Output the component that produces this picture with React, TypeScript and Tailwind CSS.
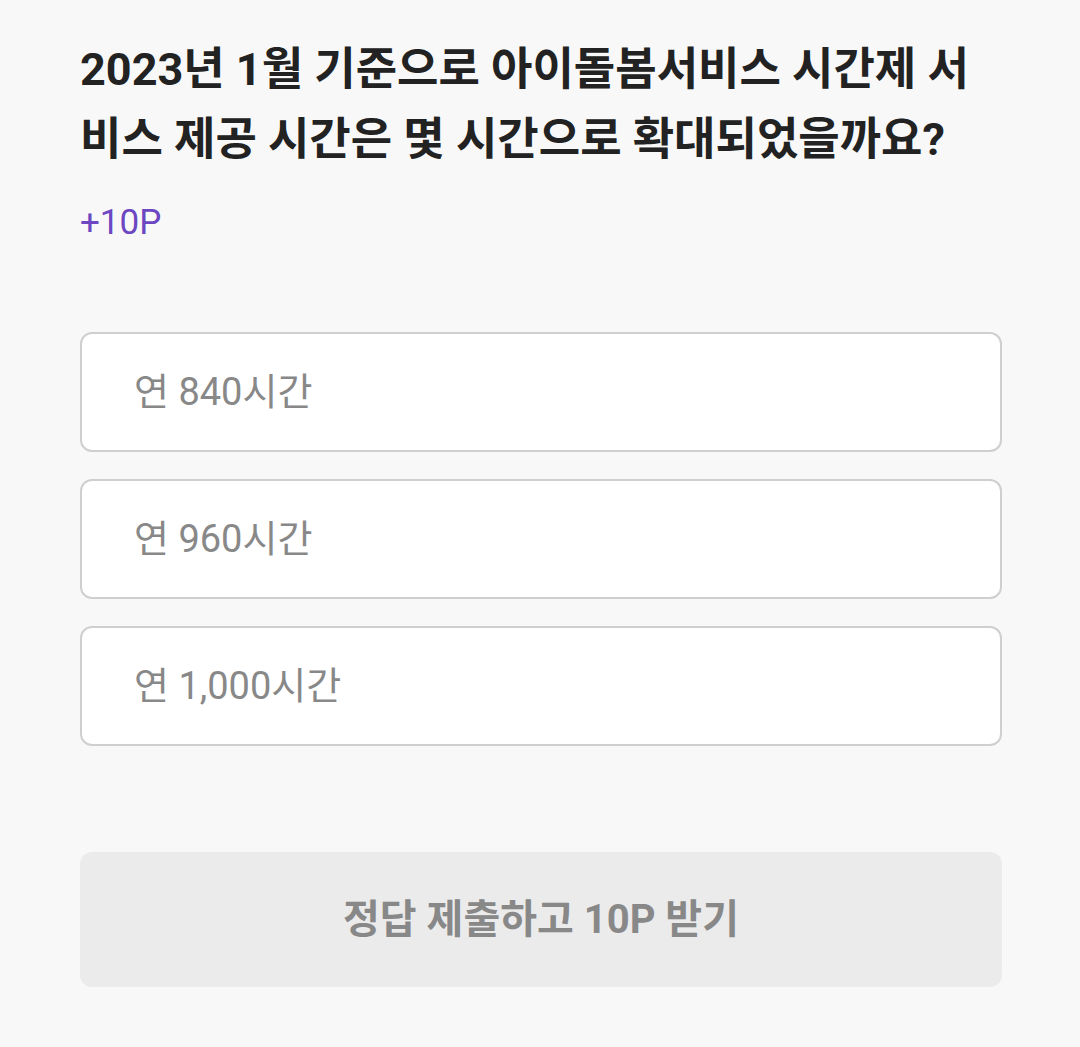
const options = ["연 840시간", "연 960시간", "연 1,000시간"];

export default function App() {
  return (
    <div className="min-h-screen w-full bg-[#f8f8f8] font-['Roboto','Noto_Sans_CJK_KR',sans-serif]">
      <div className="px-[80px] pt-[35px] pb-[60px] w-[1082px]">
        {/* Question */}
        <h1 className="text-[45px] font-bold leading-[70px] text-[#222222]">
          2023년 1월 기준으로 아이돌봄서비스 시간제 서비스 제공 시간은 몇 시간으로 확대되었을까요?
        </h1>
        <p className="mt-[28px] text-[35px] leading-[40px] text-[#6c47c1]">+10P</p>

        {/* Options */}
        <div className="mt-[89px] flex flex-col gap-[27px]">
          {options.map((o) => (
            <button
              key={o}
              className="h-[120px] w-full rounded-[12px] border-2 border-[#cfcfcf] bg-white pl-[52px] text-left text-[38px] text-[#888888]"
            >
              {o}
            </button>
          ))}
        </div>

        {/* Submit */}
        <button className="mt-[106px] h-[135px] w-full rounded-[12px] bg-[#ebebeb] text-[40px] font-bold text-[#888888]">
          정답 제출하고 10P 받기
        </button>
      </div>
    </div>
  );
}
